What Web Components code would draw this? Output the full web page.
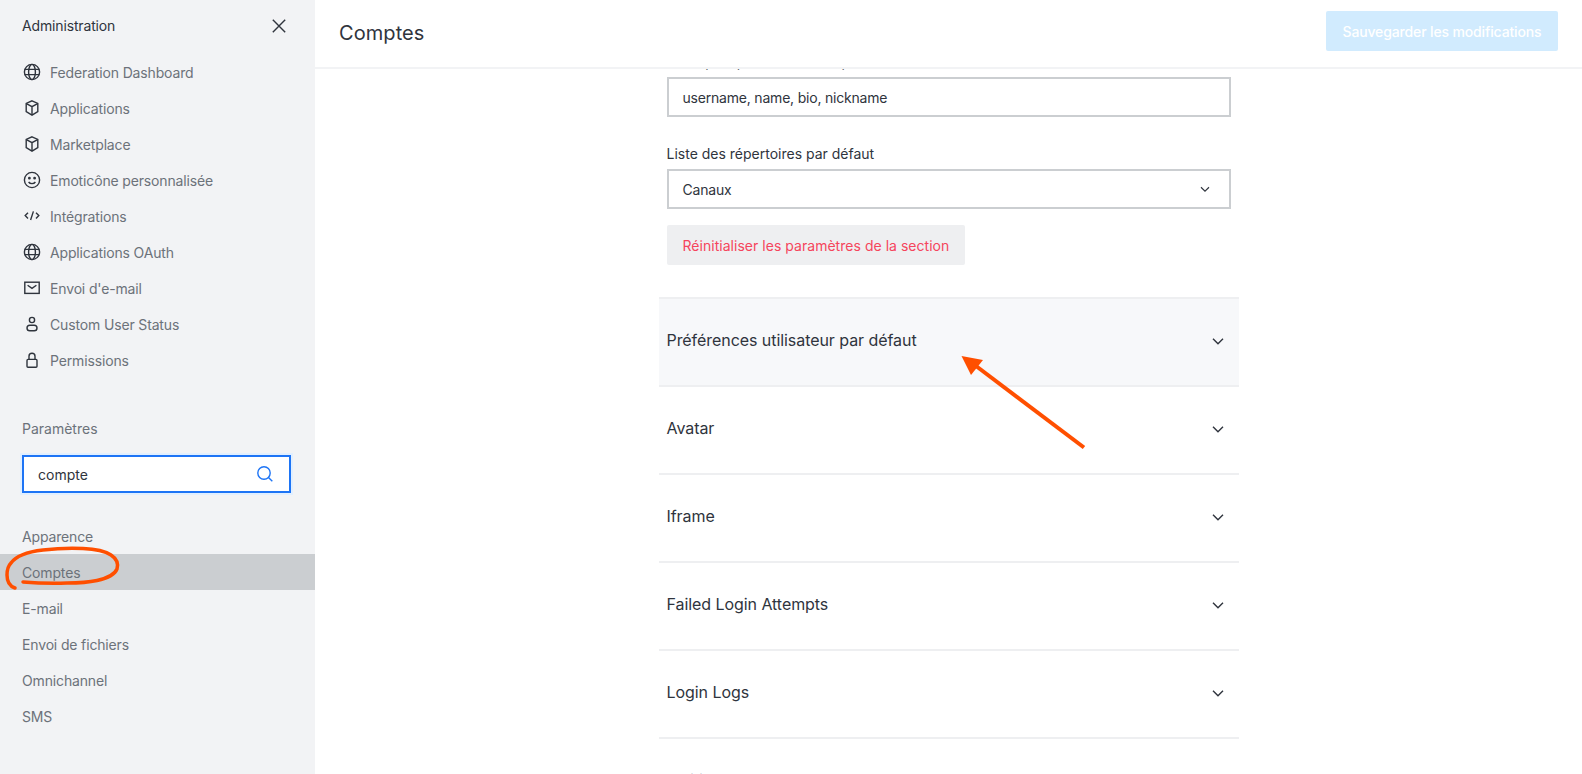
<!DOCTYPE html>
<html lang="fr">
<head>
<meta charset="utf-8">
<title>Comptes</title>
<style>
  html, body { margin: 0; height: 100%; overflow: hidden; }
  body { font-family: Inter, "Liberation Sans", sans-serif; color: #2f343d; }
</style>
</head>
<body>
<admin-page></admin-page>

<script>
const ICONS = {
  globe: '<circle cx="10" cy="10" r="7.6"/><ellipse cx="10" cy="10" rx="3.4" ry="7.6"/><path d="M2.6 7.4h14.8M2.6 12.6h14.8"/>',
  box: '<path d="M10 2.8l5.8 2.6v8.2L10 17.2l-5.8-3.6V5.4z"/><path d="M4.4 5.6L10 8.6l5.6-3M10 8.6v8.4"/>',
  smile: '<circle cx="10" cy="10" r="7.6"/><circle cx="7.4" cy="8.2" r=".7" fill="currentColor"/><circle cx="12.6" cy="8.2" r=".7" fill="currentColor"/><path d="M6.6 12c1.6 2.2 5.2 2.2 6.8 0"/>',
  code: '<path d="M6 6.8L3.2 9.6 6 12.4M14 6.8l2.8 2.8-2.8 2.8M11.4 5.4l-2.8 8.6"/>',
  mail: '<rect x="2.8" y="4.2" width="14.4" height="11.2"/><path d="M5.600 7.200l4.400 3.200 4.400-3.200"/>',
  user: '<circle cx="10" cy="6" r="2.6"/><rect x="5" y="11.2" width="10" height="5.6" rx="2.8"/>',
  lock: '<rect x="5" y="9.4" width="10" height="7.8" rx="1"/><path d="M7 9.4V6.2a3 3 0 0 1 6 0v3.2"/>',
  close: '<path d="M3.8 3.8l12.4 12.4M16.2 3.8L3.8 16.2"/>',
  chevron: '<path d="M5 7.8l5 5 5-5"/>',
  search: '<circle cx="9" cy="9" r="6.200"/><path d="M13.500 13.500l3.800 3.800"/>'
}

class AppIcon extends HTMLElement {
  static get tag() {
    return 'app-icon'
  }

  connectedCallback() {
    const size = this.getAttribute('size') || 20
    const weight = this.getAttribute('weight') || 1.4
    this.attachShadow({ mode: 'open' }).innerHTML = `
      <style>
        :host { display: inline-flex; flex: none; width: ${size}px; height: ${size}px; }
        svg { width: 100%; height: 100%; fill: none; stroke: currentColor; stroke-width: ${weight}; }
      </style>
      <svg viewBox="0 0 20 20">${ICONS[this.getAttribute('name')]}</svg>`
  }
}

class NavItem extends HTMLElement {
  static get tag() {
    return 'nav-item'
  }

  connectedCallback() {
    const icon = this.getAttribute('icon')
    this.attachShadow({ mode: 'open' }).innerHTML = `
      <style>
        :host {
          display: flex; align-items: center; gap: 8px; height: 36px; padding: 0 22px;
          font-size: 14px; color: #6c727a; letter-spacing: -0.15px;
        }
        :host([active]) { background: #cbced1; }
        app-icon { color: #2f343d; }
      </style>
      ${icon ? `<app-icon name="${icon}"></app-icon>` : ''}
      <slot></slot>`
  }
}

class AdminSidebar extends HTMLElement {
  static get tag() {
    return 'admin-sidebar'
  }

  connectedCallback() {
    this.attachShadow({ mode: 'open' }).innerHTML = `
      <style>
        :host { display: block; flex: none; width: 315px; height: 100%; background: #f2f3f5; font-size: 14px; }
        .head {
          display: flex; align-items: center; justify-content: space-between;
          height: 51px; margin-bottom: 3px; padding: 0 26px 0 22px; color: #2f343d; letter-spacing: -0.15px;
        }
        .label { margin: 41px 22px 16px; line-height: 20px; color: #6c727a; }
        .search {
          display: flex; align-items: center; justify-content: space-between;
          box-sizing: border-box; height: 38px; margin: 0 24px 0 22px; padding: 0 14px 0 14px;
          background: #fff; border: 2px solid #1d74f5; box-shadow: 0 0 0 2px #e1efff;
          color: #2f343d;
        }
        .search app-icon { color: #1d74f5; }
        .list { margin-top: 25px; }
      </style>
      <div class="head">Administration<app-icon name="close"></app-icon></div>
      <nav>
        <nav-item icon="globe">Federation Dashboard</nav-item>
        <nav-item icon="box">Applications</nav-item>
        <nav-item icon="box">Marketplace</nav-item>
        <nav-item icon="smile">Emoticône personnalisée</nav-item>
        <nav-item icon="code">Intégrations</nav-item>
        <nav-item icon="globe">Applications OAuth</nav-item>
        <nav-item icon="mail">Envoi d'e-mail</nav-item>
        <nav-item icon="user">Custom User Status</nav-item>
        <nav-item icon="lock">Permissions</nav-item>
      </nav>
      <div class="label">Paramètres</div>
      <div class="search">compte<app-icon name="search"></app-icon></div>
      <div class="list">
        <nav-item>Apparence</nav-item>
        <nav-item active>Comptes</nav-item>
        <nav-item>E-mail</nav-item>
        <nav-item>Envoi de fichiers</nav-item>
        <nav-item>Omnichannel</nav-item>
        <nav-item>SMS</nav-item>
      </div>`
  }
}

class PageHeader extends HTMLElement {
  static get tag() {
    return 'page-header'
  }

  connectedCallback() {
    this.attachShadow({ mode: 'open' }).innerHTML = `
      <style>
        :host {
          display: flex; flex: none; align-items: center; justify-content: space-between;
          box-sizing: border-box; height: 69px; padding: 0 24px 5px; border-bottom: 2px solid #f2f3f5;
        }
        h1 { margin: 3px 0 0; font-size: 20px; font-weight: 400; color: #2f343d; letter-spacing: 0.08px; }
        button {
          height: 40px; padding: 0 16.500px; border: 0; border-radius: 2px; background: #d1ebfe;
          color: #fff; font: 500 14px Inter, "Liberation Sans", sans-serif; letter-spacing: -0.14px;
        }
      </style>
      <h1><slot></slot></h1>
      <button>Sauvegarder les modifications</button>`
  }
}

class SettingField extends HTMLElement {
  static get tag() {
    return 'setting-field'
  }

  connectedCallback() {
    const select = this.hasAttribute('select')
    this.attachShadow({ mode: 'open' }).innerHTML = `
      <style>
        :host { display: block; margin-bottom: 27px; font-size: 14px; color: #2f343d; }
        .label { margin-bottom: 5px; line-height: 20px; }
        .box {
          display: flex; align-items: center; justify-content: space-between;
          box-sizing: border-box; height: 40px; padding: 0 16px 0 14px;
          border: 2px solid #cbced1; background: #fff; letter-spacing: -0.2px;
        }
      </style>
      <div class="label">${this.getAttribute('label')}</div>
      <div class="box"><span><slot></slot></span>${select ? '<app-icon name="chevron" size="16"></app-icon>' : ''}</div>`
  }
}

class SectionRow extends HTMLElement {
  static get tag() {
    return 'section-row'
  }

  connectedCallback() {
    this.attachShadow({ mode: 'open' }).innerHTML = `
      <style>
        :host {
          display: flex; align-items: center; justify-content: space-between;
          box-sizing: border-box; height: 88px; padding: 0 11px 4px 8px;
          border-top: 2px solid #eeeff1; font-size: 16px; font-weight: 400; color: #2f343d;
          letter-spacing: -0.06px;
        }
        :host([open]) { background: #f7f8fa; }
        app-icon { position: relative; top: 1px; }
      </style>
      <slot></slot>
      <app-icon name="chevron"></app-icon>`
  }
}

class AccountSettings extends HTMLElement {
  static get tag() {
    return 'account-settings'
  }

  connectedCallback() {
    this.attachShadow({ mode: 'open' }).innerHTML = `
      <style>
        :host { display: block; flex: 1; min-height: 0; overflow: hidden; }
        .column { width: 580px; margin: -17px auto 0; }
        .fields { padding: 0 8px; }
        setting-field + setting-field { margin-bottom: 16px; }
        .reset {
          display: block; height: 40px; margin-bottom: 32px; padding: 0 16px; border: 0; border-radius: 2px;
          background: #eeeff1; color: #f5455c; font: 400 14px Inter, "Liberation Sans", sans-serif; letter-spacing: 0.03px;
        }
      </style>
      <div class="column">
        <div class="fields">
          <setting-field label="Champs à prendre en compte">username, name, bio, nickname</setting-field>
          <setting-field label="Liste des répertoires par défaut" select>Canaux</setting-field>
          <button class="reset">Réinitialiser les paramètres de la section</button>
        </div>
        <section-row open>Préférences utilisateur par défaut</section-row>
        <section-row>Avatar</section-row>
        <section-row>Iframe</section-row>
        <section-row>Failed Login Attempts</section-row>
        <section-row>Login Logs</section-row>
        <section-row>Politique de mot de passe</section-row>
      </div>`
  }
}

// orange marks drawn over the capture, free position on the page
class ScreenMarks extends HTMLElement {
  static get tag() {
    return 'screen-marks'
  }

  connectedCallback() {
    this.attachShadow({ mode: 'open' }).innerHTML = `
      <style>
        :host { position: absolute; inset: 0; pointer-events: none; }
        svg { width: 100%; height: 100%; }
      </style>
      <svg viewBox="0 0 1582 774">
        <path d="M15 588C9 586 7 581 7 575C7 569 8 566 11 563C16 556 26 552 43 550C60 548 72 548 83 548.500C96 549 105 551 111 555C117 559 118.500 564 117 569C115 574 108 578 97 580.500C88 582.500 78 583 67 583C50 583.500 36 583 23 582" fill="none" stroke="#ff4f00" stroke-width="3.500" stroke-linecap="round"/>
        <path d="M1084 447.500L976 366" fill="none" stroke="#ff4f00" stroke-width="4"/>
        <path d="M961.500 356L983 360L971 375z" fill="#ff4f00"/>
      </svg>`
  }
}

class AdminPage extends HTMLElement {
  static get tag() {
    return 'admin-page'
  }

  connectedCallback() {
    this.attachShadow({ mode: 'open' }).innerHTML = `
      <style>
        :host { display: flex; position: relative; height: 100vh; background: #fff; }
        main { display: flex; flex-direction: column; flex: 1; min-width: 0; }
      </style>
      <admin-sidebar></admin-sidebar>
      <main>
        <page-header>Comptes</page-header>
        <account-settings></account-settings>
      </main>
      <screen-marks></screen-marks>`
  }
}

[AppIcon, NavItem, AdminSidebar, PageHeader, SettingField, SectionRow, AccountSettings, ScreenMarks, AdminPage]
  .forEach(el => customElements.define(el.tag, el))
</script>
</body>
</html>
